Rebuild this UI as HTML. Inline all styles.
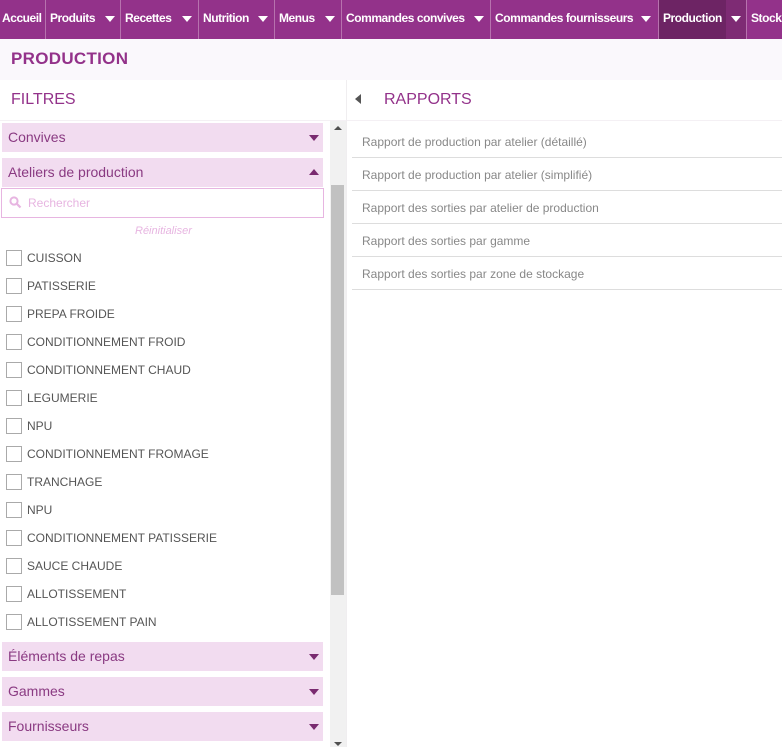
<!DOCTYPE html>
<html><head><meta charset="utf-8"><style>
*{box-sizing:border-box;margin:0;padding:0}
body{width:782px;height:747px;overflow:hidden;font-family:"Liberation Sans",Arial,sans-serif;background:#fff;position:relative}
.nav{position:absolute;left:0;top:0;width:782px;height:39px;background:#93328a;white-space:nowrap}
.ni{position:absolute;top:0;height:39px;color:#fff;font-weight:bold;font-size:12px;line-height:37px;border-right:1px solid #b772ae;letter-spacing:-0.45px}
.ni .t{position:absolute;left:4px}
.ar{position:absolute;top:16px;width:0;height:0;border-left:5px solid transparent;border-right:5px solid transparent;border-top:6px solid #fff}
.hdr{position:absolute;left:0;top:39px;width:782px;height:41px;background:#faf8fc}
.hdr span{position:absolute;left:11px;top:10px;font-size:17px;font-weight:bold;color:#93328a;letter-spacing:0.3px}
.ttl{position:absolute;font-size:16px;color:#93328a}
.acc{position:absolute;left:2px;width:321px;height:29px;background:#f2dcf0;color:#8a3a82;font-size:14px;line-height:29px;padding-left:6px}
.acc i{position:absolute;right:4px;top:12px;border-left:5px solid transparent;border-right:5px solid transparent;border-top:6px solid #7a2a70}
.acc i.up{border-top:none;border-bottom:6px solid #7a2a70;top:11px}
.cb{position:absolute;left:6px;font-size:12px;color:#555;line-height:18px}
.cb b{display:inline-block;width:16px;height:16px;border:1px solid #aaa;vertical-align:top;margin-top:1px;margin-right:5px;background:#fff}
.rp{position:absolute;left:352px;width:430px;height:33px;border-bottom:1px solid #ddd;font-size:12px;color:#888;line-height:35px;padding-left:10px}
</style></head><body>
<div class="nav">
<div class="ni" style="left:0;width:46px"><span class="t" style="left:2px">Accueil</span></div>
<div class="ni" style="left:46px;width:75px"><span class="t">Produits</span><i class="ar" style="left:59px"></i></div>
<div class="ni" style="left:121px;width:78px"><span class="t">Recettes</span><i class="ar" style="left:61px"></i></div>
<div class="ni" style="left:199px;width:76px"><span class="t">Nutrition</span><i class="ar" style="left:59px"></i></div>
<div class="ni" style="left:275px;width:67px"><span class="t">Menus</span><i class="ar" style="left:50px"></i></div>
<div class="ni" style="left:342px;width:149px"><span class="t">Commandes convives</span><i class="ar" style="left:132px"></i></div>
<div class="ni" style="left:491px;width:168px"><span class="t">Commandes fournisseurs</span><i class="ar" style="left:150px"></i></div>
<div class="ni" style="left:659px;width:67px;background:#6d2464;border-right:none"><span class="t">Production</span></div>
<div class="ni" style="left:726px;width:21px;background:#7e2b74"><i class="ar" style="left:5px"></i></div>
<div class="ni" style="left:747px;width:60px;border:none"><span class="t">Stocks</span></div>
</div>
<div class="hdr"><span>PRODUCTION</span></div>
<div class="ttl" style="left:11px;top:91px">FILTRES</div>
<div style="position:absolute;left:0;top:120px;width:346px;height:1px;background:#f4f0f4"></div>
<div style="position:absolute;left:346px;top:80px;width:1px;height:667px;background:#f0eef0"></div>
<div style="position:absolute;left:355px;top:94px;border-top:5px solid transparent;border-bottom:5px solid transparent;border-right:6px solid #555"></div>
<div class="ttl" style="left:384px;top:91px">RAPPORTS</div>
<div style="position:absolute;left:347px;top:120px;width:435px;height:1px;background:#f4f0f4"></div>
<div style="position:absolute;left:330px;top:121px;width:16px;height:626px;background:#f1f1f1"></div>
<div style="position:absolute;left:331px;top:185px;width:13px;height:410px;background:#c1c1c1"></div>
<div style="position:absolute;left:334px;top:126px;border-left:4px solid transparent;border-right:4px solid transparent;border-bottom:4px solid #505050"></div>
<div style="position:absolute;left:334px;top:742px;border-left:4px solid transparent;border-right:4px solid transparent;border-top:4px solid #505050"></div>

<div class="acc" style="top:123px">Convives<i></i></div>
<div class="acc" style="top:158px">Ateliers de production<i class="up"></i></div>
<div style="position:absolute;left:1px;top:188px;width:323px;height:30px;border:1px solid #e7b5e1;background:#fff">
<svg style="position:absolute;left:7px;top:7px" width="13" height="13" viewBox="0 0 13 13"><circle cx="5" cy="5" r="3.6" fill="none" stroke="#e7b5e1" stroke-width="2"/><path d="M7.8 7.8L11.5 11.5" stroke="#e7b5e1" stroke-width="2.2"/></svg>
<span style="position:absolute;left:26px;top:7px;font-size:12px;color:#e7b5e1">Rechercher</span></div>
<div style="position:absolute;left:135px;top:225px;font-size:11px;font-style:italic;color:#e7b5e1">Réinitialiser</div>
<div class="cb" style="top:249px"><b></b>CUISSON</div>
<div class="cb" style="top:277px"><b></b>PATISSERIE</div>
<div class="cb" style="top:305px"><b></b>PREPA FROIDE</div>
<div class="cb" style="top:333px"><b></b>CONDITIONNEMENT FROID</div>
<div class="cb" style="top:361px"><b></b>CONDITIONNEMENT CHAUD</div>
<div class="cb" style="top:389px"><b></b>LEGUMERIE</div>
<div class="cb" style="top:417px"><b></b>NPU</div>
<div class="cb" style="top:445px"><b></b>CONDITIONNEMENT FROMAGE</div>
<div class="cb" style="top:473px"><b></b>TRANCHAGE</div>
<div class="cb" style="top:501px"><b></b>NPU</div>
<div class="cb" style="top:529px"><b></b>CONDITIONNEMENT PATISSERIE</div>
<div class="cb" style="top:557px"><b></b>SAUCE CHAUDE</div>
<div class="cb" style="top:585px"><b></b>ALLOTISSEMENT</div>
<div class="cb" style="top:613px"><b></b>ALLOTISSEMENT PAIN</div>
<div class="acc" style="top:642px">Éléments de repas<i></i></div>
<div class="acc" style="top:677px">Gammes<i></i></div>
<div class="acc" style="top:712px">Fournisseurs<i></i></div>

<div class="rp" style="top:125px">Rapport de production par atelier (détaillé)</div>
<div class="rp" style="top:158px">Rapport de production par atelier (simplifié)</div>
<div class="rp" style="top:191px">Rapport des sorties par atelier de production</div>
<div class="rp" style="top:224px">Rapport des sorties par gamme</div>
<div class="rp" style="top:257px">Rapport des sorties par zone de stockage</div>
</body></html>
